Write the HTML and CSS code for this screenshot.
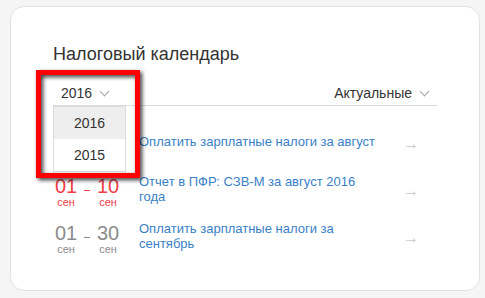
FILE: index.html
```html
<!DOCTYPE html>
<html lang="ru">
<head>
  <meta charset="UTF-8" />
  <meta name="viewport" content="width=device-width, initial-scale=1.0" />
  <title>Налоговый календарь</title>
  <link rel="stylesheet" href="styles.css">
</head>
<body>
  <div class="card">
    <h2 class="title">Налоговый календарь</h2>
    <div class="toolbar">
      <div class="year-select">
        <span>2016</span><span class="chevron"></span>
        <ul class="year-menu">
          <li class="active">2016</li>
          <li>2015</li>
        </ul>
      </div>
      <div class="filter">
        <span>Актуальные</span><span class="chevron"></span>
      </div>
    </div>
    <ul class="events">
      <li class="event">
        <!-- dates of the first row are covered by the open year menu -->
        <div class="dates"></div>
        <a class="event-name" href="#">Оплатить зарплатные налоги за август</a>
        <span class="arrow">&rarr;</span>
      </li>
      <li class="event urgent">
        <div class="dates">
          <div class="day"><b>01</b><i>сен</i></div>
          <span class="dash"></span>
          <div class="day"><b>10</b><i>сен</i></div>
        </div>
        <a class="event-name" href="#">Отчет в ПФР: СЗВ-М за август 2016 года</a>
        <span class="arrow">&rarr;</span>
      </li>
      <li class="event">
        <div class="dates">
          <div class="day"><b>01</b><i>сен</i></div>
          <span class="dash"></span>
          <div class="day"><b>30</b><i>сен</i></div>
        </div>
        <a class="event-name" href="#">Оплатить зарплатные налоги за сентябрь</a>
        <span class="arrow">&rarr;</span>
      </li>
    </ul>
    <div class="highlight"></div>
  </div>
</body>
</html>
```

FILE: styles.css
```css
:root {
  --text: #333;
  --muted: #8c8c8c;
  --link: #3a7fc6;
  --red: #ee4048;
  --line: #dcdcdc;
}
* { box-sizing: border-box; }
body {
  margin: 0;
  background: #f5f5f5;
  font-family: "Liberation Sans", Arial, sans-serif;
  color: var(--text);
}
.card {
  position: relative;
  margin: 6px 0 0 10px;
  width: 470px;
  height: 285px;
  background: #fff;
  border: 1px solid #e2e2e2;
  border-radius: 14px;
  padding: 37px 42px 0 42px;
}
.title {
  margin: 0;
  font-size: 18px;
  font-weight: normal;
  line-height: 20px;
}
.toolbar {
  display: flex;
  justify-content: space-between;
  align-items: center;
  margin-top: 21px;
  height: 21px;
  padding: 0 0 4px 8px;
  border-bottom: 1px solid var(--line);
  font-size: 14px;
  line-height: 16px;
}
.year-select, .filter { display: flex; align-items: center; }
.year-select { position: relative; }
.filter { padding-right: 9px; }
.chevron {
  width: 7px; height: 7px;
  margin: -4px 0 0 9px;
  border-right: 1.5px solid #a4a4a4;
  border-bottom: 1.5px solid #a4a4a4;
  transform: rotate(45deg);
}
.year-menu {
  position: absolute;
  left: -8px; top: 21px;
  z-index: 2;
  width: 73px;
  margin: 0; padding: 0;
  list-style: none;
  background: #fff;
  border: 1px solid var(--line);
}
.year-menu li {
  height: 32px;
  line-height: 32px;
  text-align: center;
}
.year-menu .active { background: #eee; }
.events {
  margin: 0;
  padding: 14px 0 0;
  list-style: none;
}
.event {
  display: flex;
  align-items: center;
  height: 47px;
}
.dates {
  display: flex;
  align-items: flex-start;
  width: 86px;
  flex: none;
  margin-top: 2px;
  color: var(--muted);
}
.day {
  display: flex;
  flex-direction: column;
  align-items: center;
  width: 26px;
}
.day b {
  font-weight: normal;
  font-size: 20px;
  line-height: 20px;
}
.day i {
  font-style: normal;
  font-size: 11px;
  line-height: 12px;
}
.dash {
  width: 6px; height: 1px;
  margin: 14px 5px 0;
  background: currentColor;
}
.urgent .dates { color: var(--red); }
.event-name {
  width: 244px;
  flex: none;
  color: var(--link);
  text-decoration: none;
  font-size: 13px;
  line-height: 15px;
  margin-top: -4px;
}
.arrow {
  margin-left: 20px;
  color: #c8c8c8;
  font-size: 16px;
}
.highlight {
  position: absolute;
  left: 25px; top: 63px;
  width: 104px; height: 108px;
  border: 5px solid #f00;
  z-index: 3;
  filter: drop-shadow(2px 2px 2px rgba(0,0,0,0.8));
}
```
